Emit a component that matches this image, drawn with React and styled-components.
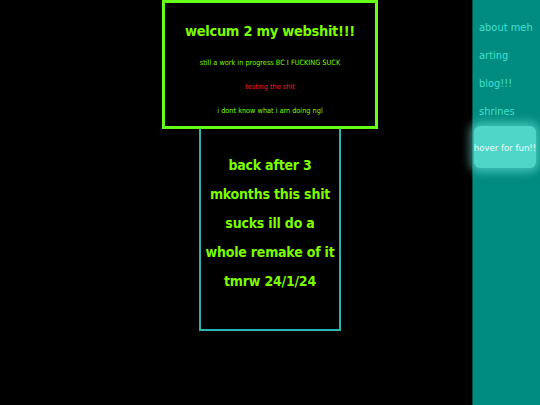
import React from "react";
import styled, { createGlobalStyle } from "styled-components";

const Global = createGlobalStyle`
  html, body { margin: 0; padding: 0; background: #000; }
  body {
    font-family: "Comic Sans MS", "DejaVu Sans Condensed", "DejaVu Sans", sans-serif;
    width: 540px;
    height: 405px;
    overflow: hidden;
  }
`;

const Page = styled.div`
  display: flex;
  width: 540px;
  height: 405px;
`;

const Main = styled.main`
  flex: 1;
  display: flex;
  flex-direction: column;
  align-items: flex-start;
`;

const Header = styled.header`
  margin-left: 162px;
  width: 216px;
  height: 129px;
  box-sizing: border-box;
  border: 3px solid #66ff1a;
  display: flex;
  flex-direction: column;
  align-items: center;
  padding-top: 18px;
  color: #7cfc00;
  text-align: center;
  white-space: nowrap;
`;

const Title = styled.h1`
  margin: 0 0 17px;
  font-size: 14.5px;
  line-height: 20px;
  font-weight: bold;
  letter-spacing: -0.3px;
`;

const Line = styled.p`
  margin: 0 0 15px;
  font-size: 7.3px;
  line-height: 9px;
  color: ${(p) => (p.red ? "#ff1a1a" : "#7cfc00")};
`;

const Content = styled.section`
  margin-left: 199px;
  width: 142px;
  height: 202px;
  box-sizing: border-box;
  border: 2px solid #2ab3b0;
  border-top: none;
  padding-top: 22px;
  color: #7cfc00;
  text-align: center;
  font-size: 14px;
  font-weight: bold;
  line-height: 29px;
  letter-spacing: -0.2px;
  white-space: nowrap;
`;

const Side = styled.nav`
  width: 67px;
  background: #008b80;
  border-left: 1px solid #00544d;
  display: flex;
  flex-direction: column;
  padding-top: 14px;
`;

const NavLink = styled.a`
  color: #40e0d0;
  font-size: 11px;
  padding-left: 6px;
  height: 28px;
  line-height: 28px;
  text-decoration: none;
  white-space: nowrap;
`;

const HoverBox = styled.div`
  margin: 0 4px 0 1px;
  height: 42px;
  border-radius: 6px;
  background: #4fd6c8;
  box-shadow: 0 0 10px 4px rgba(120, 240, 225, 0.55);
  color: #eafffb;
  font-size: 9.5px;
  display: flex;
  align-items: center;
  justify-content: center;
  white-space: nowrap;
`;

export default function App() {
  return (
    <Page>
      <Global />
      <Main>
        <Header>
          <Title>welcum 2 my webshit!!!</Title>
          <Line>still a work in progress BC I FUCKING SUCK</Line>
          <Line red>testing the shit</Line>
          <Line>i dont know what i am doing ngl</Line>
        </Header>
        <Content>
          back after 3<br />
          mkonths this shit<br />
          sucks ill do a<br />
          whole remake of it<br />
          tmrw 24/1/24
        </Content>
      </Main>
      <Side>
        <NavLink>about meh</NavLink>
        <NavLink>arting</NavLink>
        <NavLink>blog!!!</NavLink>
        <NavLink>shrines</NavLink>
        <HoverBox>hover for fun!!</HoverBox>
      </Side>
    </Page>
  );
}
